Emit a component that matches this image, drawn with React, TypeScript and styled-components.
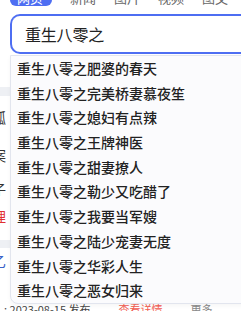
import React from 'react';
import styled, { createGlobalStyle } from 'styled-components';

const suggestions = [
  '重生八零之肥婆的春天',
  '重生八零之完美桥妻慕夜笙',
  '重生八零之媳妇有点辣',
  '重生八零之王牌神医',
  '重生八零之甜妻撩人',
  '重生八零之勒少又吃醋了',
  '重生八零之我要当军嫂',
  '重生八零之陆少宠妻无度',
  '重生八零之华彩人生',
  '重生八零之恶女归来',
];

const tabs = ['网页', '新闻', '图片', '视频', '图文'];

const App: React.FC = () => {
  return (
    <>
      <GlobalStyle />
      <Page>
        <TabBar>
          {tabs.map((t, i) => (
            <Tab key={t} active={i === 0}>{t}</Tab>
          ))}
        </TabBar>
        <SearchBox>
          <SearchText>重生八零之</SearchText>
        </SearchBox>

        <Results>
          <Band h={33} />
          <Band h={9} grey />
          <Line h={42}>狐</Line>
          <Line h={34}>案</Line>
          <Line h={34}>子</Line>
          <Line h={20} color="#e03030">理</Line>
          <Band h={14} />
          <Band h={8} grey />
          <Line h={26} color="#3a62c8">乙</Line>
          <Bottom>
            <BottomBlack>: 2023-08-15 发布</BottomBlack>
            <BottomRed>查看详情</BottomRed>
            <BottomGrey>更多</BottomGrey>
          </Bottom>
        </Results>

        <Dropdown>
          {suggestions.map((s) => (
            <Item key={s}>{s}</Item>
          ))}
        </Dropdown>
      </Page>
    </>
  );
};

export default App;

const GlobalStyle = createGlobalStyle`
  html, body {
    margin: 0;
    padding: 0;
    background: #fff;
    overflow: hidden;
  }
  body {
    font-family: "Noto Sans CJK SC", "Noto Sans", sans-serif;
  }
`;

const Page = styled.div`
  position: relative;
  width: 241px;
  height: 311px;
  overflow: hidden;
  background: #fff;
`;

const TabBar = styled.div`
  display: flex;
  align-items: center;
  gap: 18px;
  margin-top: -10px;
  padding-left: 10px;
  height: 16px;
`;

const Tab = styled.div<{ active?: boolean }>`
  height: 16px;
  padding: 0 ${(p) => (p.active ? '7px' : '0')};
  border-radius: 6px;
  background: ${(p) => (p.active ? '#4e6ef2' : 'transparent')};
  color: ${(p) => (p.active ? '#fff' : '#666')};
  font-size: 13px;
  line-height: 16px;
  width: ${(p) => (p.active ? '28px' : 'auto')};
  white-space: nowrap;
`;

const SearchBox = styled.div`
  margin: 8px 0 0 10px;
  width: 260px;
  height: 36px;
  border: 2px solid #4e6ef2;
  border-right: none;
  border-radius: 10px 0 0 10px;
  display: flex;
  align-items: center;
  padding-left: 13px;
  box-sizing: content-box;
`;

const SearchText = styled.span`
  font-size: 16px;
  color: #222;
  letter-spacing: -0.2px;
`;

const Results = styled.div`
  display: flex;
  flex-direction: column;
`;

const Band = styled.div<{ h: number; grey?: boolean }>`
  height: ${(p) => p.h}px;
  background: ${(p) => (p.grey ? '#eef0f4' : 'transparent')};
`;

const Line = styled.div<{ h: number; color?: string }>`
  height: ${(p) => p.h}px;
  display: flex;
  align-items: center;
  margin-left: -8px;
  font-size: 14px;
  color: ${(p) => p.color || '#333'};
`;

const Bottom = styled.div`
  display: flex;
  gap: 28px;
  font-size: 11px;
  line-height: 14px;
  color: #333;
  margin-top: 28px;
  padding-left: 4px;
  white-space: nowrap;
`;

const BottomBlack = styled.span`
  color: #444;
`;

const BottomRed = styled.span`
  color: #f25a4e;
`;

const BottomGrey = styled.span`
  color: #888;
`;

const Dropdown = styled.ul`
  position: absolute;
  top: 55px;
  left: 10px;
  width: 260px;
  margin: 0;
  padding: 0;
  list-style: none;
  background: #fbfbfd;
  border: 1px solid #e2e5ee;
  border-radius: 0 0 0 8px;
  box-shadow: 0 2px 4px rgba(0, 0, 0, 0.04);
`;

const Item = styled.li`
  height: 24.7px;
  line-height: 24.7px;
  padding-left: 6px;
  font-size: 14px;
  font-weight: 500;
  color: #222;
  white-space: nowrap;
`;
